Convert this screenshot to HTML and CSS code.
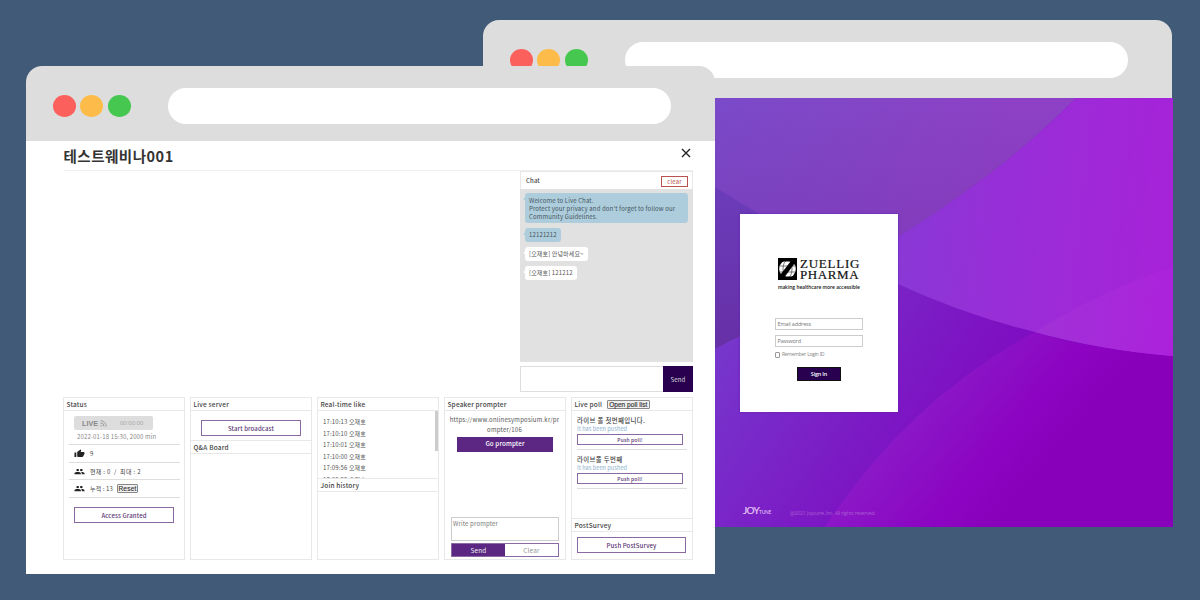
FILE: index.html
```html
<!DOCTYPE html>
<html lang="en">
<head>
<meta charset="utf-8">
<title>Webinar console</title>
<link rel="stylesheet" href="styles.css">
</head>
<body>
<main class="desk">
  <section class="window window-back">
    <header class="chrome">
      <i class="dot red"></i><i class="dot yellow"></i><i class="dot green"></i><div class="address"></div>
    </header>
    <div class="login-page">
      <svg class="waves" viewBox="483 98 690 429" preserveAspectRatio="none">
        <defs>
          <linearGradient id="base" gradientUnits="userSpaceOnUse" x1="715" y1="340" x2="1040" y2="560">
            <stop offset="0" stop-color="#7638cc"/><stop offset=".48" stop-color="#7c17c4"/><stop offset=".8" stop-color="#8205bf"/><stop offset="1" stop-color="#8800b7"/>
          </linearGradient>
          <linearGradient id="top" gradientUnits="userSpaceOnUse" x1="715" y1="110" x2="960" y2="220">
            <stop offset="0" stop-color="#7a4aca"/><stop offset=".5" stop-color="#8346c7"/><stop offset="1" stop-color="#8e41c6"/>
          </linearGradient>
          <linearGradient id="shade" gradientUnits="userSpaceOnUse" x1="0" y1="98" x2="0" y2="260">
            <stop offset="0" stop-color="#7030a0" stop-opacity="0"/><stop offset="1" stop-color="#7030a8" stop-opacity=".4"/>
          </linearGradient>
          <linearGradient id="left" gradientUnits="userSpaceOnUse" x1="0" y1="187" x2="0" y2="349">
            <stop offset="0" stop-color="#6b3cba"/><stop offset="1" stop-color="#6630a6"/>
          </linearGradient>
          <linearGradient id="right" gradientUnits="userSpaceOnUse" x1="900" y1="240" x2="1173" y2="270">
            <stop offset="0" stop-color="#8938d6"/><stop offset=".35" stop-color="#972fd7"/><stop offset="1" stop-color="#a722d9"/>
          </linearGradient>
          <linearGradient id="low" gradientUnits="userSpaceOnUse" x1="900" y1="400" x2="1020" y2="500">
            <stop offset="0" stop-color="#8a1dc9"/><stop offset=".7" stop-color="#8c03c1"/><stop offset="1" stop-color="#8900ba"/>
          </linearGradient>
          <linearGradient id="edge" gradientUnits="userSpaceOnUse" x1="1035" y1="310" x2="1173" y2="330">
            <stop offset="0" stop-color="#a032d6"/><stop offset="1" stop-color="#ac22dc"/>
          </linearGradient>
        </defs>
        <path fill="url(#base)" d="M483 98H1173V527H483z"/>
        <path fill="url(#low)" d="M825 527Q907 401 1035 332Q1090 350 1173 356V527z"/>
        <path fill="url(#top)" d="M483 98H1076C1030 145 970 192 898 237Q820 296 740 336L715 349H483z"/>
        <path fill="url(#shade)" d="M483 98H1076C1030 145 970 192 898 237Q820 296 740 336L715 349H483z"/>
        <path fill="url(#left)" d="M483 187H715Q737 201 758 213L850 260L740 336L715 349H483z"/>
        <path fill="url(#right)" d="M1076 98H1173V356Q1100 350 1035 332Q965 315 898 284L850 260L898 237C970 192 1030 145 1076 98z"/>
        <path fill="url(#edge)" d="M1035 332Q1100 291 1173 267V356Q1100 350 1035 332z"/>
      </svg>
      <form class="login-card">
        <div class="brand">
          <svg class="globe" viewBox="0 0 19 22" preserveAspectRatio="none">
            <path d="M0 0H19V22H0z"/>
            <ellipse cx="9.500" cy="11" rx="8.300" ry="9" fill="#fff"/>
            <g fill="none" stroke="#222" stroke-width=".6"><ellipse cx="9.500" cy="11" rx="4.500" ry="9"/><path d="M2 8H17M2 14H17"/></g>
            <path d="M1 1H18V3.500L7 18.500H17.500V21H1V18.500L12.500 3.500H1z"/>
          </svg>
          <div class="brand-name"><span class="zu">ZUELLIG</span><span class="ph">PHARMA</span></div>
        </div>
        <div class="tagline">making healthcare more accessible</div>
        <div class="field first">Email address</div>
        <div class="field">Password</div>
        <div class="remember"><i></i><span>Remember Login ID</span></div>
        <div class="signin">Sign In</div>
      </form>
      <footer class="login-foot"><span class="joy">JOY<small>TUNE</small></span><span class="copy">@2021 Joytune, Inc. All rights reserved.</span></footer>
    </div>
  </section>

  <section class="window window-front">
    <header class="chrome">
      <i class="dot red"></i><i class="dot yellow"></i><i class="dot green"></i><div class="address"></div>
    </header>
    <div class="console">
      <div class="titlebar"><h1>테스트웨비나001</h1>
        <svg class="close" viewBox="0 0 10 10"><path d="M1 1L9 9M9 1L1 9" fill="none" stroke="#222" stroke-width="1.4"/></svg>
      </div>
      <div class="stage">
        <aside class="chat">
          <div class="chat-head"><b>Chat</b><span class="clear">clear</span></div>
          <div class="chat-log">
            <div class="msg blue wide">Welcome to Live Chat.<br>Protect your privacy and don't forget to follow our<br>Community Guidelines.</div>
            <div class="msg blue num">12121212</div>
            <div class="msg">[오재호] 안녕하세요~</div>
            <div class="msg">[오재호] 121212</div>
          </div>
          <div class="chat-input"><div class="box"></div><div class="send">Send</div></div>
        </aside>
      </div>
      <div class="panels">
        <section class="panel">
          <h2>Status</h2>
          <div class="status">
            <div class="live"><b>LIVE</b>
              <svg viewBox="0 0 8 8"><g fill="none" stroke="#888" stroke-width=".9"><path d="M.5 .8A6.700 6.700 0 0 1 7.200 7.500M.5 3.400A4.100 4.100 0 0 1 4.600 7.500"/></g><circle cx="1.300" cy="6.700" r=".8" fill="#888"/></svg>
              <span>00:00:00</span></div>
            <div class="date">2022-01-18 15:30, 2000 min</div>
            <div class="stat"><svg viewBox="0 0 24 24" preserveAspectRatio="none"><path d="M1 21h4V9H1v12zm22-11c0-1.100-.9-2-2-2h-6.310l.95-4.570.03-.32c0-.41-.17-.79-.44-1.060L14.170 1 7.590 7.590C7.220 7.950 7 8.450 7 9v10c0 1.100.9 2 2 2h9c.83 0 1.540-.5 1.840-1.220l3.020-7.050c.09-.23.14-.47.14-.73v-2z"/></svg><span>9</span></div>
            <div class="stat"><svg viewBox="0 0 24 24" preserveAspectRatio="none"><path d="M16 11c1.660 0 2.990-1.340 2.990-3S17.660 5 16 5s-3 1.340-3 3 1.340 3 3 3zm-8 0c1.660 0 2.990-1.340 2.990-3S9.660 5 8 5 5 6.340 5 8s1.340 3 3 3zm0 2c-2.330 0-7 1.170-7 3.500V19h14v-2.500C15 14.170 10.330 13 8 13zm8 0c-.29 0-.62.020-.97.050 1.160.84 1.970 1.970 1.970 3.450V19h6v-2.500c0-2.330-4.670-3.500-7-3.500z"/></svg><span class="k1">현재 : 0 &nbsp;/ &nbsp;최대 : 2</span></div>
            <div class="stat"><svg viewBox="0 0 24 24" preserveAspectRatio="none"><path d="M16 11c1.660 0 2.990-1.340 2.990-3S17.660 5 16 5s-3 1.340-3 3 1.340 3 3 3zm-8 0c1.660 0 2.990-1.340 2.990-3S9.660 5 8 5 5 6.340 5 8s1.340 3 3 3zm0 2c-2.330 0-7 1.170-7 3.500V19h14v-2.500C15 14.170 10.330 13 8 13zm8 0c-.29 0-.62.020-.97.050 1.160.84 1.970 1.970 1.970 3.450V19h6v-2.500c0-2.330-4.670-3.500-7-3.500z"/></svg><span class="k2">누적 : 13</span><span class="native reset">Reset</span></div>
            <div class="btn access">Access Granted</div>
          </div>
        </section>
        <section class="panel">
          <h2>Live server</h2>
          <div class="server"><div class="btn">Start broadcast</div></div>
          <h2 class="mid">Q&amp;A Board</h2>
        </section>
        <section class="panel">
          <h2>Real-time like</h2>
          <div class="likes"><div class="like-list"><span>17:10:13 오재호</span><span>17:10:10 오재호</span><span>17:10:01 오재호</span><span>17:10:00 오재호</span><span>17:09:56 오재호</span><span>17:09:55 오재호</span></div><i class="scroll"></i></div>
          <h2 class="mid">Join history</h2>
        </section>
        <section class="panel">
          <h2>Speaker prompter</h2>
          <div class="prompter">
            <div class="url">https://www.onlinesymposium.kr/pr<br>ompter/106</div>
            <div class="go">Go prompter</div>
            <div class="write">Write prompter</div>
            <div class="pair"><span>Send</span><span>Clear</span></div>
          </div>
        </section>
        <section class="panel">
          <h2>Live poll <span class="native open">Open poll list</span></h2>
          <div class="polls">
            <div class="poll"><b>라이브 폴 첫번째입니다.</b><small>It has been pushed</small><div class="btn">Push poll!</div></div>
            <div class="poll"><b>라이브폴 두번째</b><small>It has been pushed</small><div class="btn">Push poll!</div></div>
          </div>
          <h2 class="mid">PostSurvey</h2>
          <div class="btn survey">Push PostSurvey</div>
        </section>
      </div>
    </div>
  </section>
</main>
</body>
</html>
```
FILE: styles.css
```css
* { box-sizing: border-box; }
body { margin: 0; font-family: "Noto Sans CJK KR", "Noto Sans", sans-serif; }
.desk { position: relative; width: 1200px; height: 600px; overflow: hidden; background: #415a78; }
.window { position: absolute; width: 689px; }
.window-back { left: 483px; top: 20px; }
.window-front { left: 26px; top: 66px; }
.chrome { height: 78px; padding: 2px 44px 0 26.500px; display: flex; align-items: center; background: #ddd; border-radius: 16px 16px 0 0; }
.window-front .chrome { height: 75px; padding-top: 5px; }
.dot { width: 23px; height: 21.500px; margin-right: 4.600px; border-radius: 50%; flex: none; }
.red { background: #fc605c; }
.yellow { background: #fdbc49; }
.green { background: #46c850; }
.address { flex: 1; height: 36px; margin-left: 33px; background: #fff; border-radius: 19px; }

.login-page { position: relative; width: 690px; height: 429px; padding: 116px 0 0 257px; }
.waves { position: absolute; left: 0; top: 0; width: 690px; height: 429px; }
.login-card { position: relative; width: 158px; height: 198px; padding: 42px 35px 0; background: #fff; box-shadow: 0 0 2px #6421a5; }
.brand { display: flex; height: 24px; padding: 2px 0 0 3px; gap: 3px; }
.globe { width: 19px; height: 22px; flex: none; }
.brand-name { font: 13px/11px "Liberation Serif", serif; color: #111; -webkit-text-stroke: .2px #111; }
.brand-name span { display: block; white-space: nowrap; width: max-content; }
.zu { letter-spacing: .75px; }
.ph { letter-spacing: .6px; }
.tagline { height: 14px; padding-left: 3px; font: 600 5.300px/14px Lato, sans-serif; letter-spacing: .03px; color: #111; white-space: nowrap; }
.field { width: 88px; height: 12px; margin-bottom: 5px; border: 1px solid #ccc; padding-left: 1.500px; font: 5.500px/11px "Open Sans", sans-serif; letter-spacing: -.18px; color: #777; }
.field.first { margin-top: 24px; }
.remember { display: flex; align-items: center; gap: 2px; margin-top: -2px; height: 9px; font: 5.200px/9px "Open Sans", sans-serif; letter-spacing: -.38px; word-spacing: .4px; color: #888; white-space: nowrap; }
.remember i { width: 5px; height: 6px; border: 1px solid #999; border-radius: 1px; }
.signin { width: 44px; height: 14px; margin: 8px auto 0; background: #29004f; border: 1px solid #111; color: #fff; text-align: center; font: 600 5.500px/12px "Open Sans", sans-serif; letter-spacing: -.2px; }
.login-foot { position: relative; display: flex; align-items: center; gap: 19px; height: 14px; margin: 92px 0 0 3px; color: #e6caf5; }
.joy { width: 28px; white-space: nowrap; font: 10px/14px Lato, sans-serif; letter-spacing: -.7px; -webkit-text-stroke: .2px #e6caf5; }
.joy small { font-size: 4.800px; letter-spacing: -.2px; -webkit-text-stroke: 0; }
.copy { font: 5.300px/12px "Open Sans", sans-serif; letter-spacing: -.25px; color: #aa5bd2; padding-top: 4px; }

.console { height: 433px; padding: 0 22px 15px 37px; background: #fff; color: #444; font-size: 6px; letter-spacing: .14px; }
.titlebar { display: flex; justify-content: space-between; height: 30px; border-bottom: 1px solid #eee; margin-left: 1px; }
h1 { margin: 0 0 0 -.5px; font-size: 14.500px; line-height: 30px; font-weight: 700; color: #333; letter-spacing: .5px; }
.close { width: 10px; height: 10px; margin: 7px 2px 0 0; }
.stage { height: 226px; display: flex; justify-content: flex-end; }
.chat { width: 173px; }
.chat-head { height: 18px; display: flex; justify-content: space-between; padding: 5px 4px 0 5px; border: solid #e8e8e8; border-width: 1px 1px 0; }
.chat-head b { font-weight: 500; line-height: 8px; }
.clear { width: 27px; height: 11px; margin-top: -1px; border: 1px solid #b9524f; color: #b9524f; text-align: center; font-size: 6px; line-height: 10px; }
.chat-log { height: 173px; background: #e1e1e1; padding: 4px 5px; display: flex; flex-direction: column; align-items: flex-start; gap: 5px; }
.msg { position: relative; height: 14px; padding: 0 4px; border-radius: 3px; background: #fff; line-height: 14.500px; white-space: nowrap; color: #555; }
.msg::before { content: ""; position: absolute; left: -2px; top: 4px; border: solid transparent; border-width: 2px 3px 2px 0; border-right-color: #fff; }
.msg.blue { background: #aecddc; color: #44555e; }
.msg.blue::before { border-right-color: #aecddc; }
.msg.wide { width: 163px; height: 30px; padding-top: 4px; line-height: 7.800px; }
.chat-input { display: flex; height: 26px; margin-top: 4px; }
.box { flex: 1; border: 1px solid #ddd; border-right: 0; }
.send { width: 30px; background: #29004f; color: #ddd; text-align: center; line-height: 27px; font-size: 6px; }

.panels { display: grid; grid-template-columns: repeat(5, 1fr); gap: 5px; height: 163px; }
.panel { border: 1px solid #e8e8e8; min-width: 0; overflow: hidden; display: flex; flex-direction: column; }
h2 { margin: 0; flex: none; height: 13px; padding-left: 2.500px; border-bottom: 1px solid #e8e8e8; font-size: 6.500px; line-height: 13px; font-weight: 500; letter-spacing: .17px; color: #444; white-space: nowrap; }
h2.mid { height: 14px; border-top: 1px solid #e8e8e8; }
.btn { border: 1px solid #8b6aa3; color: #5a3474; text-align: center; white-space: nowrap; font-weight: 500; }
.status { padding: 5px 4px 0 5px; }
.live { display: flex; align-items: center; width: 79px; height: 14px; margin-left: 5px; padding: 0 8px; border-radius: 2px; background: #ddd; color: #888; font: 7.200px/13px "Liberation Sans", sans-serif; letter-spacing: 0; }
.live svg { width: 7px; height: 7px; margin-left: 2px; }
.live span { margin-left: 13px; color: #aaa; font-size: 6px; }
.date { height: 15px; padding-left: 8px; line-height: 13px; color: #888; border-bottom: 1px solid #ddd; white-space: nowrap; }
.stat { display: flex; align-items: center; height: 17.700px; padding-left: 5px; border-bottom: 1px solid #ddd; white-space: pre; }
.stat svg { width: 11px; height: 9px; margin-right: 5px; fill: #222; }
.k1 { letter-spacing: .33px; }
.native { font: 6.500px/8px "Liberation Sans", sans-serif; color: #333; border: 1px solid #888; border-radius: 1px; background: #f0f0f0; text-align: center; -webkit-text-stroke: .15px #333; letter-spacing: .05px; }
.reset { width: 21px; height: 9px; margin-left: 4px; line-height: 7px; letter-spacing: .25px; }
.access { width: 100px; height: 16px; margin: 8.500px 0 0 5px; line-height: 15px; }
.server { height: 29px; padding: 9px 10px 0; }
.server .btn { height: 16px; line-height: 15px; }
.likes { height: 67px; flex: none; display: flex; justify-content: space-between; overflow: hidden; }
.like-list { padding: 5px 0 0 5px; color: #555; }
.like-list span { display: block; height: 11.500px; line-height: 11.500px; white-space: nowrap; }
.scroll { width: 3px; height: 40px; background: #ccc; }
.prompter { padding: 4px 7px 0 6px; flex: 1; display: flex; flex-direction: column; }
.url { text-align: center; line-height: 10.300px; white-space: nowrap; color: #555; letter-spacing: .22px; margin: 0 -2px; }
.go { height: 15px; margin: 1px 5px 0 6px; background: #5b2783; color: #fff; text-align: center; font-size: 6.200px; line-height: 14px; font-weight: 500; }
.write { width: 108px; height: 24px; margin-top: auto; border: 1px solid #ccc; padding-left: 1px; line-height: 11px; color: #777; letter-spacing: .17px; }
.pair { display: flex; width: 108px; height: 14px; margin: 2px 0; border: 1px solid #8b6aa3; color: #999; text-align: center; font-size: 6.500px; line-height: 12px; }
.pair span { flex: 1; }
.pair span:first-child { background: #5b2783; color: #eee; }
.open { display: inline-block; width: 43px; height: 9px; margin-left: 3px; line-height: 7.500px; }
.polls { height: 107px; padding: 4px 5px 0; }
.poll { height: 35px; border-bottom: 1px solid #ddd; }
.poll b { display: block; font-size: 6.400px; line-height: 11px; font-weight: 500; letter-spacing: .36px; white-space: nowrap; }
.poll small { display: block; font-size: 5.600px; line-height: 6px; letter-spacing: .05px; color: #8db1cd; }
.poll .btn { width: 106px; height: 11px; margin-top: 2px; line-height: 10px; font-size: 5px; }
.poll:first-child { margin-bottom: 4px; }
.survey { height: 16px; margin: 5px 6px 0 5px; line-height: 15px; flex: none; }
```
